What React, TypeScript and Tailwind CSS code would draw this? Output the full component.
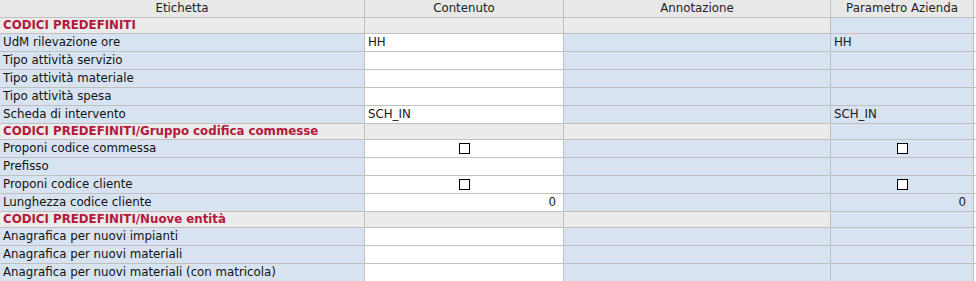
import React from "react";

type Cell = { type: "text" | "check" | "num"; value?: string };

type Row =
  | { kind: "section"; title: string }
  | { kind: "data"; label: string; content?: Cell; company?: Cell };

const rows: Row[] = [
  { kind: "section", title: "CODICI PREDEFINITI" },
  { kind: "data", label: "UdM rilevazione ore", content: { type: "text", value: "HH" }, company: { type: "text", value: "HH" } },
  { kind: "data", label: "Tipo attività servizio" },
  { kind: "data", label: "Tipo attività materiale" },
  { kind: "data", label: "Tipo attività spesa" },
  { kind: "data", label: "Scheda di intervento", content: { type: "text", value: "SCH_IN" }, company: { type: "text", value: "SCH_IN" } },
  { kind: "section", title: "CODICI PREDEFINITI/Gruppo codifica commesse" },
  { kind: "data", label: "Proponi codice commessa", content: { type: "check" }, company: { type: "check" } },
  { kind: "data", label: "Prefisso" },
  { kind: "data", label: "Proponi codice cliente", content: { type: "check" }, company: { type: "check" } },
  { kind: "data", label: "Lunghezza codice cliente", content: { type: "num", value: "0" }, company: { type: "num", value: "0" } },
  { kind: "section", title: "CODICI PREDEFINITI/Nuove entità" },
  { kind: "data", label: "Anagrafica per nuovi impianti" },
  { kind: "data", label: "Anagrafica per nuovi materiali" },
  { kind: "data", label: "Anagrafica per nuovi materiali (con matricola)" },
];

const cell = "border-r border-b border-[#c0c0c0] overflow-hidden whitespace-nowrap flex items-center";

function Value({ v }: { v?: Cell }) {
  if (!v) return null;
  if (v.type === "check")
    return (
      <div className="flex w-full justify-center">
        <span className="block h-[11px] w-[11px] border-[1.5px] border-black bg-white" />
      </div>
    );
  if (v.type === "num")
    return <div className="w-full pr-[7px] text-right text-[#1a1a1a]">{v.value}</div>;
  return <div className="pl-[3px] text-[#1a1a1a]">{v.value}</div>;
}

export default function App() {
  return (
    <div
      className="grid w-[976px] grid-cols-[365px_199px_267px_143px_1fr] bg-white text-[11.8px] leading-none text-[#111]"
      style={{ fontFamily: '"DejaVu Sans", Verdana, sans-serif' }}
    >
      {["Etichetta", "Contenuto", "Annotazione", "Parametro Azienda"].map((h) => (
        <div key={h} className={`${cell} h-[18px] justify-center bg-[#e8e8e8] text-[#222]`}>
          {h}
        </div>
      ))}
      <div className="h-[18px] border-b border-[#c0c0c0] bg-[#f2f2f2]" />

      {rows.map((r, i) =>
        r.kind === "section" ? (
          <React.Fragment key={i}>
            <div className={`${cell} h-[16px] bg-[#ebebeb] pl-[3px] font-bold text-[#b3183d]`}>{r.title}</div>
            <div className={`${cell} h-[16px] bg-[#ebebeb]`} />
            <div className={`${cell} h-[16px] bg-[#ebebeb]`} />
            <div className={`${cell} h-[16px] bg-[#d7e3f1]`} />
            <div className="h-[16px] border-b border-[#c0c0c0] bg-white" />
          </React.Fragment>
        ) : (
          <React.Fragment key={i}>
            <div className={`${cell} h-[18px] bg-[#d7e3f1] pl-[3px]`}>{r.label}</div>
            <div className={`${cell} h-[18px] bg-white`}>
              <Value v={r.content} />
            </div>
            <div className={`${cell} h-[18px] bg-[#d7e3f1]`} />
            <div className={`${cell} h-[18px] bg-[#d7e3f1]`}>
              <Value v={r.company} />
            </div>
            <div className="h-[18px] border-b border-[#c0c0c0] bg-white" />
          </React.Fragment>
        )
      )}
    </div>
  );
}
